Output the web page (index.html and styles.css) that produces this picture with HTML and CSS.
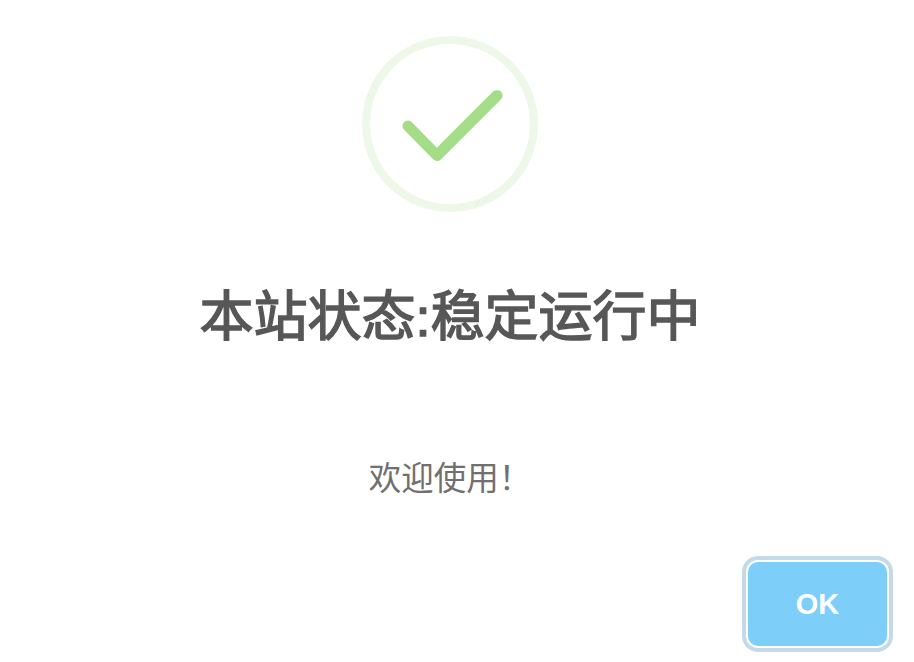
FILE: index.html
```html
<!DOCTYPE html>
<html lang="zh-CN">
<head>
  <meta charset="UTF-8">
  <title>本站状态</title>
  <link rel="stylesheet" href="styles.css">
</head>
<body>
  <div class="modal">
    <svg class="icon" width="176" height="176" viewBox="0 0 176 176">
      <circle class="ring" cx="88" cy="88" r="84"/>
      <path class="tick" d="M9.700 49l5 4M5.300 58l6 5M113 170l5-6M122 166l5-6"/>
      <path class="check" d="M46 90l29 29.500 60-60"/>
    </svg>
    <h2 class="title">本站状态:稳定运行中</h2>
    <div class="text">欢迎使用！</div>
    <div class="footer">
      <button class="confirm">OK</button>
    </div>
  </div>
</body>
</html>
```

FILE: styles.css
```css
body {
  margin: 0;
  background: #fff;
  font-family: "Liberation Sans", "Noto Sans CJK SC", sans-serif;
}

.modal {
  display: flex;
  flex-direction: column;
  align-items: center;
  width: 900px;
  height: 662px;
  padding-top: 36px;
  box-sizing: border-box;
}

.icon {
  display: block;
}

.ring {
  fill: none;
  stroke: #eef8e8;
  stroke-width: 8;
}

.tick {
  fill: none;
  stroke: #e2f2d8;
  stroke-width: 1;
}

.check {
  fill: none;
  stroke: #a5dc86;
  stroke-width: 11;
  stroke-linecap: round;
  stroke-linejoin: round;
}

.title {
  margin: 72px 0 0;
  font-size: 54px;
  line-height: 66px;
  font-weight: 400;
  -webkit-text-stroke: 1.500px #575757;
  color: #575757;
}

.text {
  margin-top: 109px;
  font-size: 32.500px;
  line-height: 40px;
  color: #707070;
}

.footer {
  align-self: stretch;
  display: flex;
  justify-content: flex-end;
  margin-top: 63px;
  padding-right: 13px;
}

.confirm {
  width: 139px;
  height: 84px;
  padding: 0;
  border: none;
  border-radius: 10px;
  background: #7dcffa;
  box-shadow: 0 0 0 2px #fff, 0 0 0 6px #c5d9e8;
  color: #fff;
  font-family: inherit;
  font-size: 29px;
  font-weight: 700;
}
```
